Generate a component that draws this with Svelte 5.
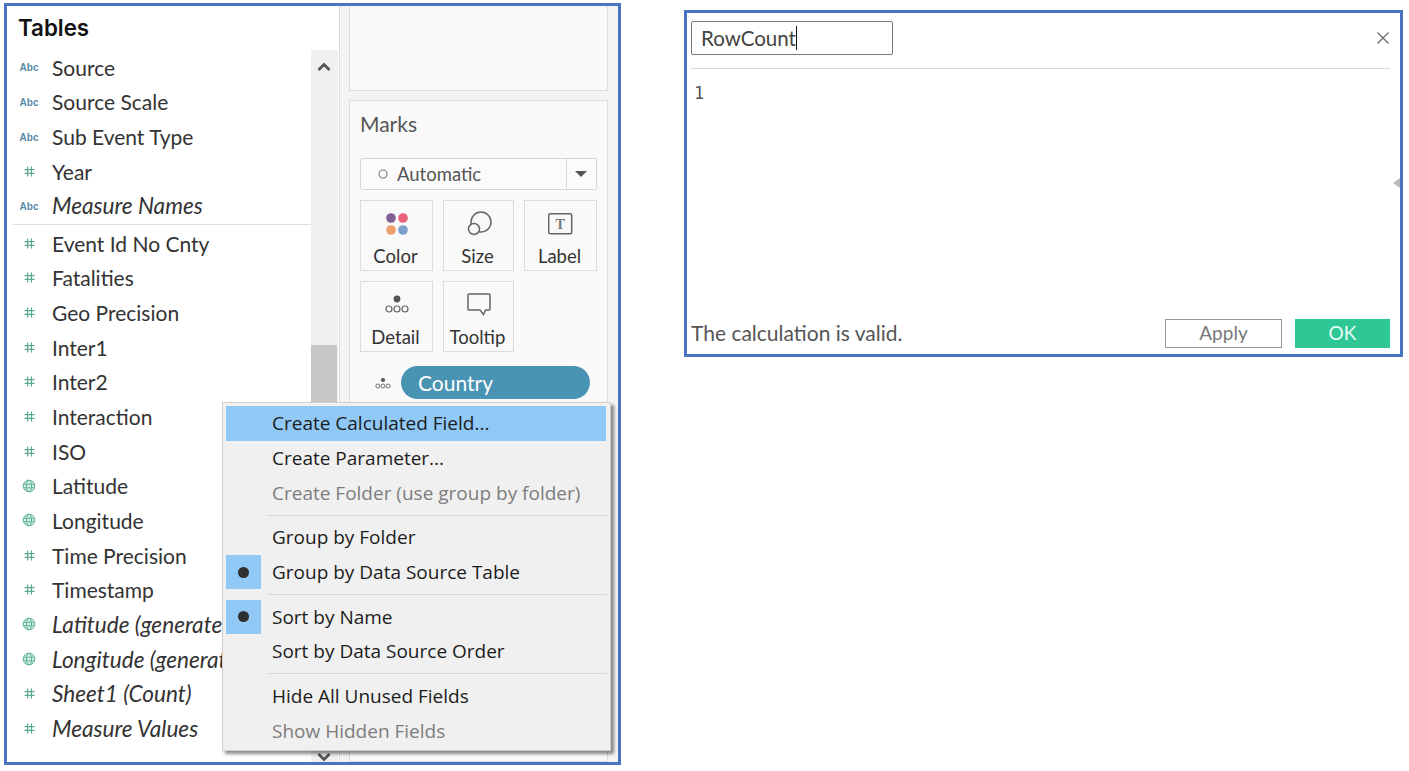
<script>
  const topFields = [
    { icon: 'abc', name: 'Source' },
    { icon: 'abc', name: 'Source Scale' },
    { icon: 'abc', name: 'Sub Event Type' },
    { icon: 'num', name: 'Year' },
    { icon: 'abc', name: 'Measure Names', calc: true }
  ];

  const measures = [
    { icon: 'num', name: 'Event Id No Cnty' },
    { icon: 'num', name: 'Fatalities' },
    { icon: 'num', name: 'Geo Precision' },
    { icon: 'num', name: 'Inter1' },
    { icon: 'num', name: 'Inter2' },
    { icon: 'num', name: 'Interaction' },
    { icon: 'num', name: 'ISO' },
    { icon: 'geo', name: 'Latitude' },
    { icon: 'geo', name: 'Longitude' },
    { icon: 'num', name: 'Time Precision' },
    { icon: 'num', name: 'Timestamp' },
    { icon: 'geo', name: 'Latitude (generated)', calc: true },
    { icon: 'geo', name: 'Longitude (generated)', calc: true },
    { icon: 'num', name: 'Sheet1 (Count)', calc: true },
    { icon: 'num', name: 'Measure Values', calc: true }
  ];

  const menuGroups = [
    [
      { label: 'Create Calculated Field...', active: true },
      { label: 'Create Parameter...' },
      { label: 'Create Folder (use group by folder)', disabled: true }
    ],
    [
      { label: 'Group by Folder' },
      { label: 'Group by Data Source Table', checked: true }
    ],
    [
      { label: 'Sort by Name', checked: true },
      { label: 'Sort by Data Source Order' }
    ],
    [
      { label: 'Hide All Unused Fields' },
      { label: 'Show Hidden Fields', disabled: true }
    ]
  ];
</script>

{#snippet fieldRow(field)}
  <div class="field">
    <span class="fieldIcon">
      {#if field.icon === 'abc'}
        <span class="abc">Abc</span>
      {:else if field.icon === 'num'}
        <svg width="11" height="11" viewBox="0 0 11 11" fill="none" stroke="#5aa98c" stroke-width="1.2">
          <path d="M3.6 0.5V10.5M7.4 0.5V10.5M0.5 3.6H10.5M0.5 7.4H10.5" />
        </svg>
      {:else}
        <svg width="14" height="14" viewBox="0 0 14 14" fill="#d2efe3" stroke="#5fb294" stroke-width="1">
          <circle cx="7" cy="7" r="5.8" />
          <ellipse cx="7" cy="7" rx="2.6" ry="5.8" fill="none" />
          <path d="M1.4 5.2H12.6M1.4 8.8H12.6" fill="none" />
        </svg>
      {/if}
    </span>
    <span class="fieldName" class:calc={field.calc}>{field.name}</span>
  </div>
{/snippet}

<div class="page">
  <section class="frame leftFrame">
    <div class="dataPane">
      <h2>Tables</h2>
      <div class="listArea">
        <div class="list">
          <div class="group first">
            {#each topFields as field}
              {@render fieldRow(field)}
            {/each}
          </div>
          <div class="group">
            {#each measures as field}
              {@render fieldRow(field)}
            {/each}
          </div>
        </div>
        <div class="scrollbar">
          <svg class="chevUp" width="14" height="9" viewBox="0 0 14 9" fill="none" stroke="#555" stroke-width="2.8">
            <path d="M1.5 8L7 2.5L12.5 8" />
          </svg>
          <div class="thumb"></div>
          <svg class="chevDown" width="14" height="9" viewBox="0 0 14 9" fill="none" stroke="#555" stroke-width="2.8">
            <path d="M1.5 1L7 6.5L12.5 1" />
          </svg>
        </div>
      </div>
    </div>

    <div class="shelves">
      <div class="topCard"></div>
      <div class="marks">
        <div class="marksTitle">Marks</div>
        <div class="markType">
          <span class="markName">
            <svg width="10" height="10" viewBox="0 0 10 10" fill="none" stroke="#777" stroke-width="1.1">
              <circle cx="5" cy="5" r="4" />
            </svg>
            Automatic
          </span>
          <span class="markArrow"></span>
        </div>
        <div class="markGrid">
          <div class="markCard">
            <svg width="26" height="26" viewBox="0 0 26 26">
              <circle cx="7" cy="7" r="4.8" fill="#7f5f93" />
              <circle cx="19" cy="7" r="4.8" fill="#ea6179" />
              <circle cx="7" cy="19" r="4.8" fill="#ef9f6d" />
              <circle cx="19" cy="19" r="4.8" fill="#7b9fcb" />
            </svg>
            <span>Color</span>
          </div>
          <div class="markCard">
            <svg width="26" height="26" viewBox="0 0 26 26" fill="none" stroke="#666" stroke-width="1.5">
              <circle cx="15" cy="11" r="10" />
              <circle cx="8" cy="18" r="5.5" fill="#f9f9f9" />
            </svg>
            <span>Size</span>
          </div>
          <div class="markCard">
            <svg width="26" height="26" viewBox="0 0 26 26">
              <rect x="0.7" y="2.7" width="23" height="20" rx="1.5" fill="none" stroke="#666" stroke-width="1.5" />
              <text x="12.2" y="17.5" text-anchor="middle" class="labelT">T</text>
            </svg>
            <span>Label</span>
          </div>
          <div class="markCard">
            <svg width="26" height="26" viewBox="0 0 26 26" fill="none" stroke="#666" stroke-width="1.2">
              <circle cx="13" cy="7" r="3.4" fill="#555" stroke="none" />
              <circle cx="5" cy="17" r="3" />
              <circle cx="13" cy="17" r="3" />
              <circle cx="21" cy="17" r="3" />
            </svg>
            <span>Detail</span>
          </div>
          <div class="markCard">
            <svg width="26" height="26" viewBox="0 0 26 26" fill="none" stroke="#666" stroke-width="1.5">
              <path d="M3 2H23A1 1 0 0 1 24 3V17A1 1 0 0 1 23 18H19.5L17.5 22.5L14 18H3A1 1 0 0 1 2 17V3A1 1 0 0 1 3 2Z" />
            </svg>
            <span>Tooltip</span>
          </div>
        </div>
        <div class="pillRow">
          <svg width="18" height="14" viewBox="0 0 18 14" fill="none" stroke="#666" stroke-width="0.9">
            <circle cx="9" cy="4" r="2.1" fill="#555" stroke="none" />
            <circle cx="3.8" cy="10" r="2" />
            <circle cx="9" cy="10" r="2" />
            <circle cx="14.2" cy="10" r="2" />
          </svg>
          <div class="pill">Country</div>
        </div>
      </div>
    </div>

    <div class="menu">
      {#each menuGroups as group, i}
        {#if i > 0}<div class="menuSep"></div>{/if}
        {#each group as item}
          <div class="menuItem" class:active={item.active} class:disabled={item.disabled}>
            <span class="check" class:on={item.checked}>
              {#if item.checked}<i></i>{/if}
            </span>
            <span>{item.label}</span>
          </div>
        {/each}
      {/each}
    </div>
  </section>

  <section class="frame calcFrame">
    <div class="calcHead">
      <div class="nameBox">RowCount<span class="caret"></span></div>
      <svg class="close" width="14" height="14" viewBox="0 0 14 14" fill="none" stroke="#666" stroke-width="1.2">
        <path d="M1.5 1.5L12.5 12.5M12.5 1.5L1.5 12.5" />
      </svg>
    </div>
    <div class="editor">
      <span class="lineNo">1</span>
      <span class="grip"></span>
    </div>
    <div class="calcFoot">
      <span class="status">The calculation is valid.</span>
      <button class="apply">Apply</button>
      <button class="ok">OK</button>
    </div>
  </section>
</div>

<style>
  :global(body) {
    margin: 0;
    background: #fff;
  }

  .page {
    display: flex;
    align-items: flex-start;
    gap: 63px;
    padding: 3px 0 0 4px;
    font-family: "Lato", sans-serif;
  }

  .frame {
    box-sizing: border-box;
    border: 3px solid #4a74bf;
    background: #fff;
  }

  .leftFrame {
    position: relative;
    display: flex;
    width: 617px;
    height: 762px;
    overflow: hidden;
  }

  .dataPane {
    display: flex;
    flex-direction: column;
    width: 332px;
    flex: none;
    border-right: 1px solid #dcdcdc;
  }

  h2 {
    margin: 0;
    height: 44px;
    padding-left: 11px;
    font-family: "Inter", sans-serif;
    font-size: 22.3px;
    line-height: 44px;
    font-weight: 600;
    color: #111;
  }

  .listArea {
    flex: 1;
    display: flex;
    min-height: 0;
  }

  .list {
    width: 304px;
    flex: none;
    overflow: hidden;
  }

  .group.first {
    margin-left: 6px;
    padding-bottom: 0.7px;
    border-bottom: 1px solid #dedede;
  }

  .group.first .field {
    margin-left: -6px;
  }

  .group:not(.first) {
    padding-top: 0.9px;
  }

  .field {
    display: flex;
    align-items: center;
    height: 34.67px;
    white-space: nowrap;
  }

  .fieldIcon {
    display: flex;
    justify-content: center;
    align-items: center;
    width: 44px;
    margin-right: 1px;
    flex: none;
  }

  .abc {
    padding-top: 1px;
    font-family: "Liberation Sans", sans-serif;
    font-size: 10px;
    font-weight: 700;
    color: #5a8aa5;
  }

  .fieldName {
    font-size: 21px;
    color: #333;
  }

  .fieldName.calc {
    font-size: 22.6px;
    font-style: italic;
  }

  .scrollbar {
    position: relative;
    width: 27px;
    flex: none;
    background: #f0f0f0;
  }

  .chevUp {
    position: absolute;
    left: 6px;
    top: 12px;
  }

  .chevDown {
    position: absolute;
    left: 6px;
    bottom: 0;
  }

  .thumb {
    position: absolute;
    left: 0;
    right: 1px;
    top: 295px;
    height: 120px;
    background: #c6c6c6;
  }

  .shelves {
    flex: 1;
    display: flex;
    flex-direction: column;
    gap: 9px;
    padding: 0 11px 0 9px;
    background: #f4f4f4;
  }

  .topCard {
    height: 85px;
    box-sizing: border-box;
    flex: none;
    background: #f9f9f9;
    border: 1px solid #dcdcdc;
    border-top: none;
  }

  .marks {
    flex: 1;
    box-sizing: border-box;
    padding: 11px 10px;
    background: #f9f9f9;
    border: 1px solid #dcdcdc;
    color: #333;
  }

  .marksTitle {
    height: 24px;
    margin-bottom: 22px;
    font-size: 21px;
    line-height: 24px;
    color: #555;
  }

  .markType {
    display: flex;
    align-items: center;
    box-sizing: border-box;
    height: 32px;
    border: 1px solid #d6d6d6;
    border-radius: 2px;
    background: #fbfbfb;
  }

  .markName {
    flex: 1;
    display: flex;
    align-items: center;
    gap: 9px;
    padding-left: 17px;
    padding-bottom: 1px;
    font-size: 18.5px;
    color: #555;
  }

  .markArrow {
    position: relative;
    width: 29px;
    height: 30px;
    border-left: 1px solid #d6d6d6;
  }

  .markArrow::after {
    content: "";
    position: absolute;
    left: 8px;
    top: 12px;
    border-left: 6px solid transparent;
    border-right: 6px solid transparent;
    border-top: 6px solid #555;
  }

  .markGrid {
    display: grid;
    grid-template-columns: 73px 71px 73px;
    grid-auto-rows: 71px;
    gap: 10px;
    margin-top: 10px;
  }

  .markCard {
    display: flex;
    flex-direction: column;
    align-items: center;
    box-sizing: border-box;
    padding-top: 10px;
    gap: 6px;
    border: 1px solid #dcdcdc;
    font-size: 18.5px;
    line-height: 26px;
    color: #333;
  }

  .markCard span {
    margin-left: -2px;
  }

  .labelT {
    font-family: "Liberation Serif", serif;
    font-size: 14px;
    font-weight: 700;
    fill: #777;
  }

  .pillRow {
    display: flex;
    align-items: center;
    gap: 9px;
    margin-top: 14px;
    padding-left: 14px;
  }

  .pill {
    flex: 1;
    height: 33px;
    margin-right: 7px;
    padding-left: 17px;
    border-radius: 17px;
    background: #4a94b3;
    color: #fff;
    font-size: 21px;
    line-height: 33px;
  }

  .menu {
    position: absolute;
    left: 215px;
    top: 396px;
    box-sizing: border-box;
    width: 389px;
    height: 349px;
    padding: 3px;
    background: #f0f0f0;
    border: 1px solid #cfcfcf;
    box-shadow: 3px 3px 3px rgba(0, 0, 0, 0.45);
    font-family: "Open Sans", sans-serif;
    font-size: 19px;
    color: #1c1c1c;
  }

  .menuItem {
    display: flex;
    align-items: center;
    height: 34.7px;
    gap: 11px;
    white-space: nowrap;
  }

  .menuItem.active {
    background: #90c8f6;
    margin-right: 1px;
  }

  .menuItem.disabled {
    color: #7d7d7d;
  }

  .check {
    display: flex;
    align-items: center;
    justify-content: center;
    width: 35px;
    height: 34px;
    flex: none;
  }

  .check.on {
    background: #90c8f6;
  }

  .check i {
    width: 11px;
    height: 11px;
    border-radius: 50%;
    background: #2f2f2f;
  }

  .menuSep {
    height: 1px;
    margin: 4.5px 0 4.5px 41px;
    background: #d8d8d8;
  }

  .calcFrame {
    display: flex;
    flex-direction: column;
    width: 719px;
    height: 347px;
    margin-top: 7px;
    padding: 0 10px 0 4px;
  }

  .calcHead {
    display: flex;
    align-items: center;
    justify-content: space-between;
    box-sizing: border-box;
    height: 56px;
    padding-bottom: 6px;
    flex: none;
    border-bottom: 1px solid #d9d9d9;
  }

  .nameBox {
    display: flex;
    align-items: center;
    box-sizing: border-box;
    width: 202px;
    height: 34px;
    padding-left: 9px;
    border: 1px solid #777;
    border-radius: 2px;
    font-size: 20.5px;
    color: #444;
  }

  .caret {
    width: 1px;
    height: 24px;
    background: #111;
  }

  .editor {
    position: relative;
    flex: 1;
    padding: 14px 0 0 3px;
  }

  .lineNo {
    font-family: "DejaVu Sans Mono", monospace;
    font-size: 17px;
    color: #555;
  }

  .grip {
    position: absolute;
    right: -10px;
    top: 109px;
    border-top: 5px solid transparent;
    border-bottom: 5px solid transparent;
    border-right: 7px solid #bbb;
  }

  .calcFoot {
    display: flex;
    align-items: center;
    height: 29px;
    margin-bottom: 6px;
    flex: none;
  }

  .status {
    flex: 1;
    padding-bottom: 2px;
    font-size: 21px;
    color: #555;
  }

  button {
    box-sizing: border-box;
    height: 29px;
    padding: 0 0 2px;
    border-radius: 0;
    font-family: inherit;
    font-size: 19px;
  }

  .apply {
    width: 117px;
    margin-right: 13px;
    background: #fff;
    border: 1px solid #999;
    color: #777;
  }

  .ok {
    width: 95px;
    background: #2ec795;
    border: none;
    color: #e8fff5;
  }
</style>
